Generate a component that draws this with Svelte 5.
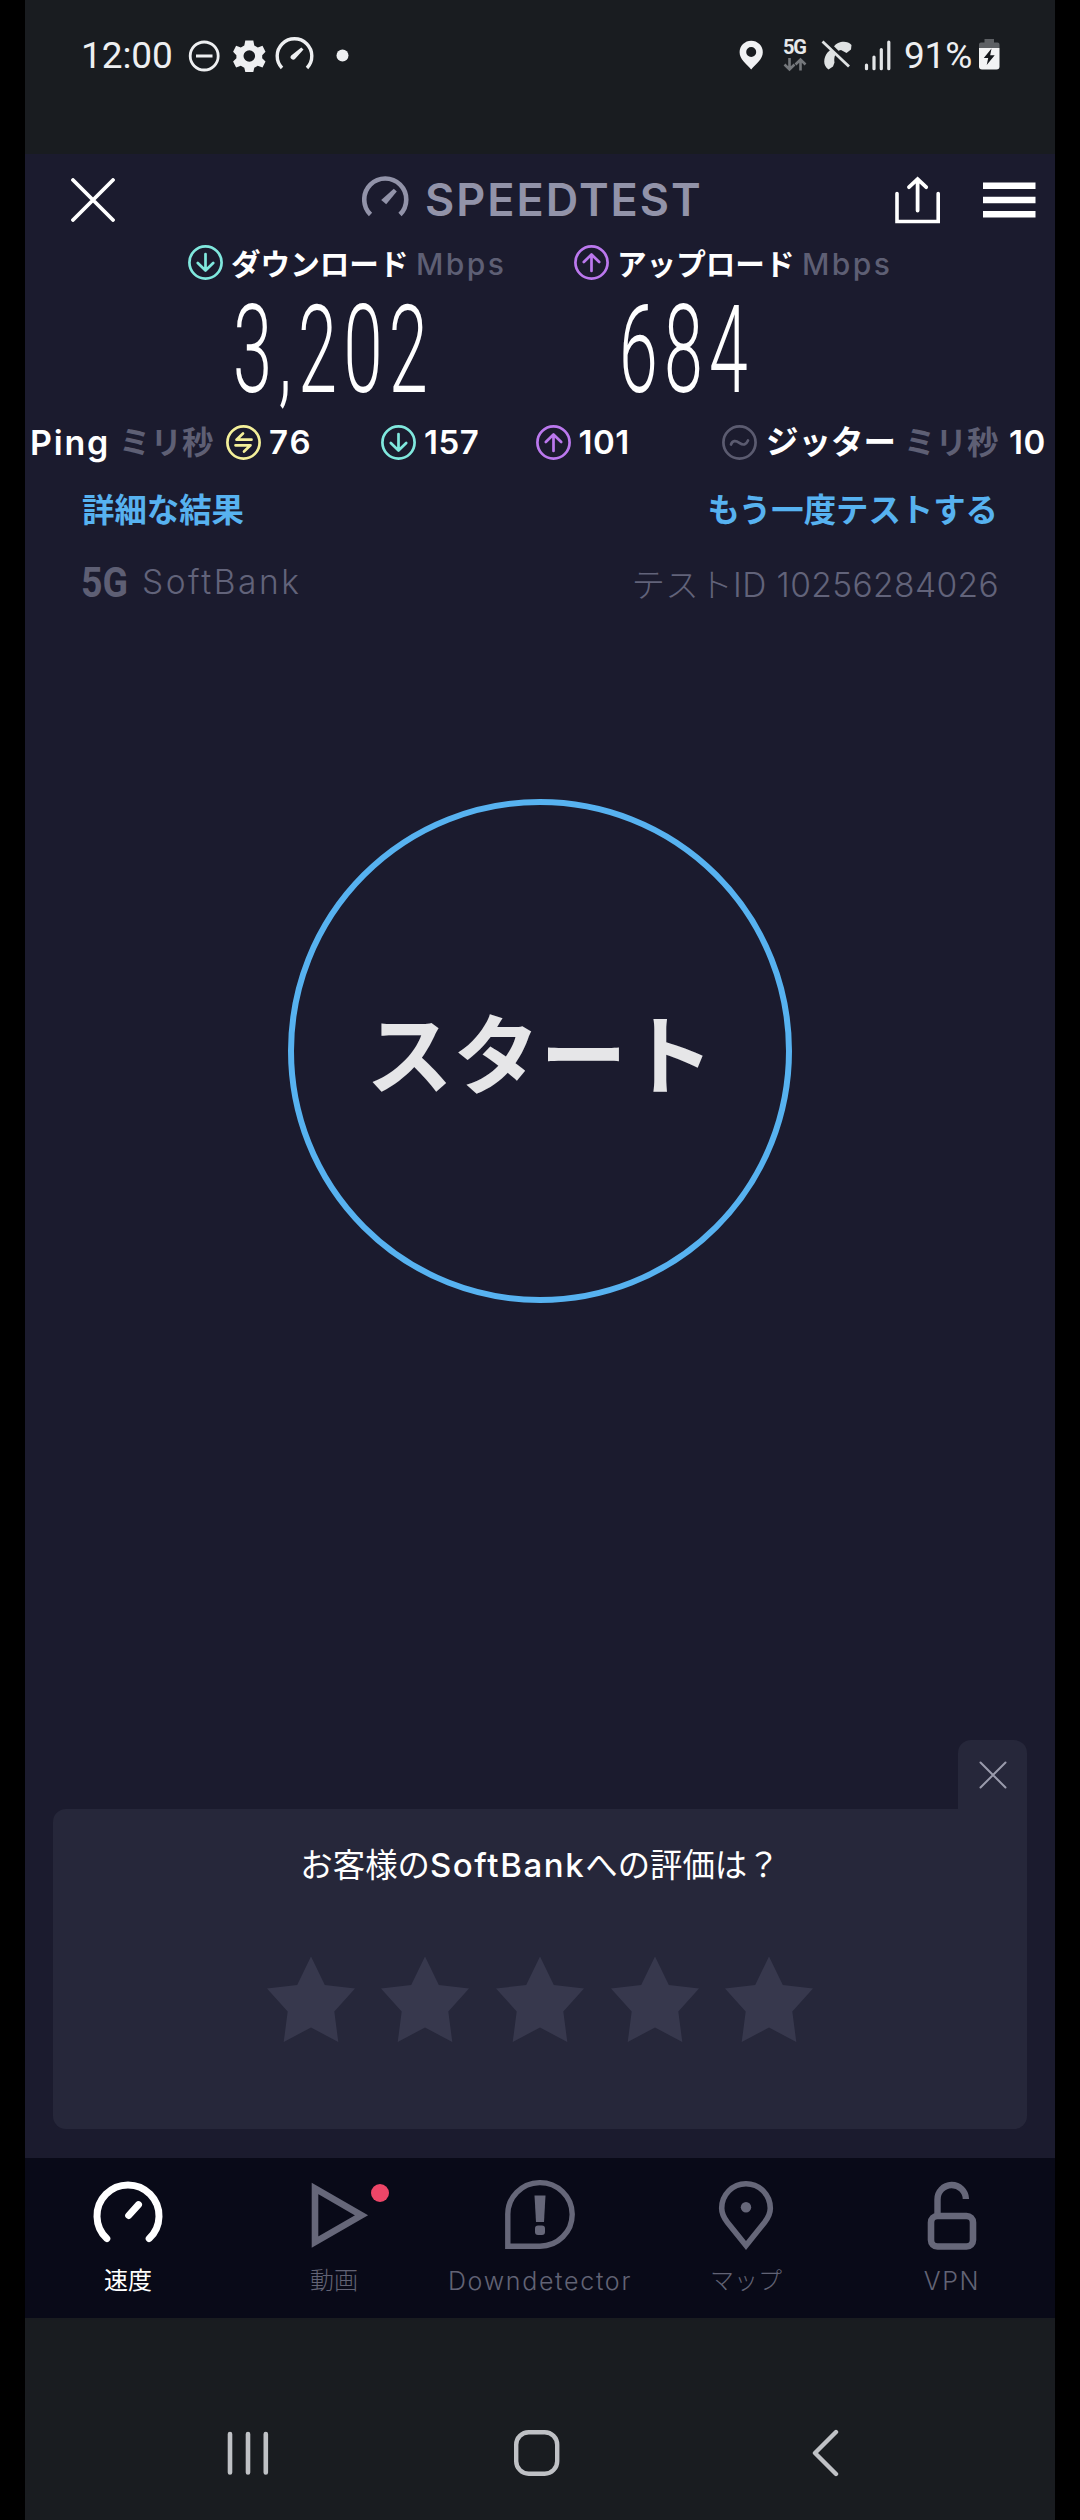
<script lang="ts">
    type Tab = {
        id: string;
        label: string;
        badge?: boolean;
    };

    const tabs: Tab[] = [
        { id: 'speed', label: '速度' },
        { id: 'video', label: '動画', badge: true },
        { id: 'detector', label: 'Downdetector' },
        { id: 'map', label: 'マップ' },
        { id: 'vpn', label: 'VPN' }
    ];

    let active = $state('speed');
    let rating = $state(0);
    let showRating = $state(true);
</script>

{#snippet ring(kind: string)}
    <svg class="ring {kind}" viewBox="0 0 35 35">
        <circle cx="17.5" cy="17.5" r="16.1" />
        {#if kind === 'download'}
            <path d="M17.5 9v16M9.8 18l7.7 7.5 7.7-7.5" />
        {:else if kind === 'upload'}
            <path d="M17.5 26V10M9.8 17l7.7-7.5 7.7 7.5" />
        {:else if kind === 'idle'}
            <path d="M25.5 14.7H10.5l6.5-6.2M9.5 20.3h15l-6.5 6.2" />
        {:else}
            <path d="M9 19.5c1.5-4 4.5-4.3 8.3-1.7 4.2 2.9 6.8 2 8.7-2.3" />
        {/if}
    </svg>
{/snippet}

{#snippet bigNumber(value: string, width: number)}
    <svg class="big" width={width + 8} height="122">
        <text x="0" y="112" textLength={width} lengthAdjust="spacingAndGlyphs">{value}</text>
    </svg>
{/snippet}

<div class="phone">
    <div class="status">
        <span class="clock">12:00</span>
        <svg width="170" height="40" viewBox="186 35 170 40">
            <circle cx="204.2" cy="56" r="14" fill="none" stroke="#eeeff1" stroke-width="2.8" />
            <path d="M196 56h16.5" stroke="#eeeff1" stroke-width="3" />
            <path
                fill="#eeeff1"
                fill-rule="evenodd"
                d="M245.300 40.500h8l1 5 3.500 2 4.700-1.700 3 6-3.300 3.400v3l3.300 3.300-3 6-4.700-1.700-3.500 2-1 4.200h-8l-1-4.200-3.500-2-4.700 1.700-3-6 3.300-3.300v-3l-3.300-3.400 3-6 4.700 1.700 3.500-2zM249.300 50.200a5.800 5.800 0 1 0 0 11.600a5.800 5.800 0 1 0 0-11.600z"
            />
            <path d="M282 68a17.300 17.300 0 1 1 25 0" fill="none" stroke="#eeeff1" stroke-width="3.4" />
            <path d="M301.300 47.500l2.200 2-8.300 9.200a2.300 2.300 0 0 1-4-3.300z" fill="#eeeff1" />
            <circle cx="342.500" cy="55.500" r="6" fill="#eeeff1" />
        </svg>
        <svg class="signals" width="160" height="40" viewBox="736 35 160 40">
            <path
                fill="#f0f1f3"
                fill-rule="evenodd"
                d="M751.200 40.700a11.600 11.600 0 0 1 11.600 11.600c0 7-6.500 11.500-11.600 17.200c-5.100-5.700-11.600-10.200-11.600-17.200a11.600 11.600 0 0 1 11.600-11.600zM751.200 47a5 5 0 1 0 0 10a5 5 0 1 0 0-10z"
            />
            <text x="783" y="53.800" textLength="24">5G</text>
            <path d="M789.500 58v11M784.500 64.500l5 5 5-5M800.500 70.500V60M795.500 64.500l5-5 5 5" fill="none" stroke="#74777b" stroke-width="2.600" />
            <path
                d="M834 46.500c3-5 13-7 17.500-1.500l-.5 4.500-4.500 3.500-5.500-3-2 .5c-5 4-5 8-4.500 12l-1.500 4-4.500 3c-6-4-5-12-1-17z"
                fill="#dfe2e3"
            />
            <path d="M824.500 40.500l26 25.500" stroke="#191c20" stroke-width="5" />
            <path d="M822.500 41.500l26.500 25" stroke="#dfe2e3" stroke-width="2.800" />
            <path d="M866.500 65v3.700M874 57v11.700M881.300 49.500v19.200M888.800 42v26.700" stroke="#e3e5e7" stroke-width="3.200" stroke-linecap="round" />
        </svg>
        <span class="percent">91%</span>
        <svg width="21" height="32" viewBox="0 0 21 32">
            <path d="M5.500 0h9.500v3.500h3.500a2 2 0 0 1 2 2V9H0V5.500a2 2 0 0 1 2-2h3.500z" fill="#5d6064" />
            <path d="M0 9h20.500v18.500a3 3 0 0 1-3 3H3a3 3 0 0 1-3-3z" fill="#f2f3f4" />
            <path d="M12.500 9.500L4.800 19h4.400l-1.500 7 8-9.700h-4.500z" fill="#15181c" />
        </svg>
    </div>

    <div class="screen">
        <header>
            <svg width="44" height="44" viewBox="0 0 44 44">
                <path d="M2 2l40 40M42 2L2 42" stroke="#fff" stroke-width="3.800" stroke-linecap="round" />
            </svg>
            <svg class="logo" width="47" height="42" viewBox="0 0 47 42">
                <path d="M8.500 38.500a21 21 0 1 1 29.500 0" fill="none" stroke="#9293a9" stroke-width="4.600" />
                <path d="M31.800 12.700l3 2.800L24.200 28.200l-5-4.300z" fill="#9293a9" />
            </svg>
            <h1>SPEEDTEST</h1>
            <svg class="share" width="46" height="48" viewBox="0 0 46 48">
                <path d="M2 17.500v28h41.200v-28" fill="none" stroke="#fff" stroke-width="3.600" stroke-linecap="round" />
                <path d="M22.600 34.500V3.500M14 11.200l8.600-8 8.600 8" fill="none" stroke="#fff" stroke-width="3.800" stroke-linecap="round" />
            </svg>
            <svg width="53" height="36" viewBox="0 0 53 36">
                <path d="M0 3.800h52.500M0 18h52.500M0 32.200h52.500" stroke="#fff" stroke-width="6.400" />
            </svg>
        </header>

        <div class="results">
            <div class="result first">
                <div class="caption">
                    {@render ring('download')}
                    <b>ダウンロード</b>
                    <span>Mbps</span>
                </div>
                {@render bigNumber('3,202', 201)}
            </div>
            <div class="result">
                <div class="caption">
                    {@render ring('upload')}
                    <b>アップロード</b>
                    <span>Mbps</span>
                </div>
                {@render bigNumber('684', 135)}
            </div>
        </div>

        <div class="latency">
            <div class="group ping">
                <span class="name">Ping</span>
                <span class="unit">ミリ秒</span>
                {@render ring('idle')}
                <span class="value">76</span>
            </div>
            <div class="group load">
                {@render ring('download')}
                <span class="value">157</span>
            </div>
            <div class="group load">
                {@render ring('upload')}
                <span class="value">101</span>
            </div>
            <div class="group jitter">
                {@render ring('jitter')}
                <span class="kana">ジッター</span>
                <span class="unit">ミリ秒</span>
                <span class="value">10</span>
            </div>
        </div>

        <div class="links">
            <span>詳細な結果</span>
            <span>もう一度テストする</span>
        </div>

        <div class="meta">
            <svg width="52" height="56">
                <text x="1" y="43" textLength="47" lengthAdjust="spacingAndGlyphs">5G</text>
            </svg>
            <span class="carrier">SoftBank</span>
            <span class="test-id">テストID 10256284026</span>
        </div>

        <button class="start">スタート</button>

        {#if showRating}
            <div class="rating">
                <button class="dismiss" aria-label="close" onclick={() => (showRating = false)}>
                    <svg width="28" height="28" viewBox="0 0 28 28">
                        <path d="M1.500 1.500l25 25M26.500 1.500l-25 25" stroke="#9a9bac" stroke-width="2" stroke-linecap="round" />
                    </svg>
                </button>
                <div class="card">
                    <p>お客様の<em>SoftBank</em>への評価は？</p>
                    <div class="stars">
                        {#each [1, 2, 3, 4, 5] as n}
                            <button class="star" class:on={n <= rating} aria-label="{n}" onclick={() => (rating = n)}>
                                <svg width="88" height="87" viewBox="0 0 88 86">
                                    <path d="M44 0l13.800 28.500 30.200 3.500-20.700 23 4 30.500L44 71 16.700 85.500l4-30.500L0 32l30.200-3.500z" />
                                </svg>
                            </button>
                        {/each}
                    </div>
                </div>
            </div>
        {/if}
    </div>

    <nav class="tabs">
        {#each tabs as tab}
            <button class="tab {tab.id}" class:active={active === tab.id} onclick={() => (active = tab.id)}>
                <svg class="tab-icon" width="110" height="72" viewBox="-55 0 110 72">
                    {#if tab.id === 'speed'}
                        <path d="M-21.200 59.500a31 31 0 1 1 42.400 0M.7 36.500L10.500 25.700" stroke-width="7" stroke-linecap="round" />
                    {:else if tab.id === 'video'}
                        <path d="M-19 9.500v53.500L27.500 36.300z" stroke-width="6.600" />
                    {:else if tab.id === 'detector'}
                        <path d="M-32.200 67.200V36.200A32.200 31.800 0 1 1 0 67.200z" stroke-width="5.400" />
                        <path class="solid" d="M-5.500 16.500H5.500L4 43h-8z" />
                        <rect class="solid" x="-5" y="46.500" width="10" height="9.500" rx="3" />
                    {:else if tab.id === 'map'}
                        <path d="M0 66.500L-18.500 43.500C-21.500 39.700-24.300 35-24.300 29.300a24.300 24.600 0 0 1 48.600 0C24.300 35 21.500 39.700 18.500 43.500z" stroke-width="5.600" />
                        <circle class="solid" cx="0" cy="28.200" r="5.200" />
                    {:else}
                        <path d="M-14.500 36V20.500a14.200 14.200 0 0 1 28.400-.5" stroke-width="6.400" />
                        <rect x="-21" y="37" width="42" height="30.500" rx="6.500" stroke-width="6.600" />
                    {/if}
                </svg>
                {#if tab.badge}
                    <i class="badge"></i>
                {/if}
                <span>{tab.label}</span>
            </button>
        {/each}
    </nav>

    <div class="system-nav">
        <svg width="42" height="46" viewBox="0 0 42 46">
            <path d="M3 4v38.500M21 4v38.500M38.800 4v38.500" stroke-width="4.600" />
        </svg>
        <svg class="home" width="46" height="46" viewBox="0 0 46 46">
            <rect x="2.200" y="2.200" width="41" height="41.500" rx="12.500" stroke-width="4.400" />
        </svg>
        <svg width="28" height="48" viewBox="0 0 28 48">
            <path d="M24 3L3 24l21 21" stroke-width="4.400" />
        </svg>
    </div>
</div>

<style>
    :global(body) {
        margin: 0;
        background: #000;
    }

    .phone {
        width: 1030px;
        height: 2520px;
        margin-left: 25px;
        display: flex;
        flex-direction: column;
        overflow: hidden;
        background: #191c20;
        color: #fff;
        font-family: Inter, "Noto Sans CJK JP", sans-serif;
    }

    svg {
        display: block;
        flex: none;
    }

    button {
        padding: 0;
        border: none;
        background: none;
        color: inherit;
        font: inherit;
    }

    .status {
        height: 154px;
        display: flex;
        align-items: flex-start;
        padding-top: 35px;
        padding-left: 56px;
        box-sizing: border-box;
        color: #eeeff1;
        font-family: Roboto, sans-serif;
        font-size: 37px;
        line-height: 42px;
    }

    .status svg:last-child {
        margin-top: 4px;
    }

    .clock {
        width: 105px;
        letter-spacing: -0.1px;
    }

    .signals {
        margin-left: 380px;
    }

    .signals text {
        font-size: 20px;
        font-weight: 700;
        fill: #e6e8ea;
    }

    .percent {
        width: 75px;
        margin-left: 8px;
        letter-spacing: -0.2px;
    }

    .screen {
        height: 2004px;
        display: flex;
        flex-direction: column;
        background: #1b1b2e;
    }

    header {
        height: 91px;
        display: flex;
        align-items: center;
        padding-left: 46px;
    }

    .logo {
        margin-left: 247px;
        margin-top: -5px;
    }

    h1 {
        width: 276px;
        margin: 0 0 0 16px;
        color: #9293a9;
        font-size: 45px;
        font-weight: 600;
        letter-spacing: 2px;
    }

    .share {
        margin-left: 193.5px;
        margin-right: 42.5px;
    }

    .results {
        height: 180px;
        display: flex;
    }

    .first {
        width: 386px;
        padding-left: 163px;
    }

    .caption {
        height: 35px;
        display: flex;
        align-items: center;
        color: #5e5f74;
        font-size: 30px;
        font-weight: 500;
        white-space: nowrap;
    }

    .caption b {
        width: 185px;
        margin-left: 8px;
        color: #fff;
        font-size: 29.6px;
        font-weight: 700;
    }

    .caption span {
        margin-top: 2px;
        letter-spacing: 2.4px;
    }

    .ring {
        width: 35px;
        height: 35px;
        fill: none;
        stroke: #5b5b70;
        stroke-width: 2.7;
        stroke-linecap: round;
        stroke-linejoin: round;
    }

    .download {
        stroke: #80e8de;
    }

    .upload {
        stroke: #bb78ee;
    }

    .idle {
        stroke: #f4f09a;
    }

    .big {
        margin-left: 45px;
        overflow: visible;
    }

    .big text {
        fill: #fff;
        font-family: Roboto, sans-serif;
        font-size: 122px;
        font-weight: 300;
        letter-spacing: 11px;
    }

    .latency {
        height: 35px;
        display: flex;
        align-items: center;
        font-size: 33px;
        font-weight: 600;
        line-height: 35px;
        white-space: nowrap;
    }

    .group {
        display: flex;
        flex: none;
        align-items: center;
    }

    .ping {
        width: 356px;
    }

    .name {
        width: 89px;
        margin-left: 5px;
        font-size: 34px;
        letter-spacing: 1.8px;
    }

    .unit {
        width: 107px;
        color: #5e5f74;
        font-size: 31.5px;
    }

    .value {
        margin-left: 8px;
        letter-spacing: 0.5px;
    }

    .ping .value {
        letter-spacing: 2px;
    }

    .load {
        width: 154.5px;
    }

    .jitter .ring {
        margin-left: 32px;
    }

    .kana {
        width: 138px;
        margin-left: 9px;
        font-size: 32.5px;
        font-weight: 700;
    }

    .jitter .unit {
        width: 97px;
    }

    .links {
        height: 50px;
        margin-top: 22px;
        padding: 0 57px 0 57px;
        display: flex;
        justify-content: space-between;
        align-items: center;
        color: #57b2f0;
        font-size: 32.4px;
        font-weight: 700;
    }

    .meta {
        height: 46px;
        margin-top: 27px;
        padding: 0 56px 0 55px;
        display: flex;
        align-items: center;
        color: #62637a;
        font-size: 33.5px;
        font-weight: 300;
    }

    .meta text {
        fill: #5e5f74;
        font-family: Roboto, sans-serif;
        font-size: 42px;
        font-weight: 700;
    }

    .carrier {
        margin-left: 10px;
        letter-spacing: 2.5px;
    }

    .test-id {
        margin-left: auto;
        letter-spacing: 0.4px;
    }

    .start {
        width: 504px;
        height: 504px;
        margin-top: 194px;
        padding-bottom: 3px;
        align-self: center;
        box-sizing: border-box;
        border: 6px solid #57b2f0;
        border-radius: 50%;
        color: #e6e6e8;
        font-size: 87px;
        font-weight: 700;
    }

    .rating {
        margin: auto 28px 29px;
        display: flex;
        flex-direction: column;
    }

    .dismiss {
        width: 69px;
        height: 69px;
        align-self: flex-end;
        display: flex;
        justify-content: center;
        align-items: center;
        box-sizing: border-box;
        border-radius: 13px 13px 0 0;
        background: #26273a;
    }

    .card {
        height: 320px;
        border-radius: 13px 0 13px 13px;
        background: #26273a;
    }

    p {
        margin: 0;
        padding-top: 32px;
        font-size: 32.4px;
        line-height: 48px;
        text-align: center;
    }

    em {
        font-size: 33px;
        font-style: normal;
        font-weight: 500;
        letter-spacing: 1.6px;
    }

    .stars {
        margin-top: 66px;
        display: flex;
        justify-content: center;
        gap: 26.7px;
    }

    .star {
        fill: #37384d;
    }

    .star.on {
        fill: #57b2f0;
    }

    .tabs {
        height: 160px;
        display: grid;
        grid-template-columns: repeat(5, 1fr);
        background: #090a18;
    }

    .tab {
        position: relative;
        display: flex;
        flex-direction: column;
        align-items: center;
        padding-top: 21px;
        color: #626375;
        font-size: 25px;
        font-weight: 300;
        line-height: 36px;
    }

    .tab span {
        margin-top: 12px;
        letter-spacing: 1.7px;
    }

    .speed span,
    .video span,
    .map span {
        font-size: 24px;
        letter-spacing: 0;
    }

    .tab-icon {
        fill: none;
        stroke: #666779;
    }

    .solid {
        fill: #666779;
        stroke: none;
    }

    .active {
        color: #fff;
        font-weight: 400;
    }

    .active .tab-icon {
        stroke: #fff;
    }

    .badge {
        position: absolute;
        top: 26px;
        left: 139.5px;
        width: 18px;
        height: 18px;
        border-radius: 50%;
        background: #ee4668;
    }

    .system-nav {
        height: 202px;
        display: flex;
        align-items: center;
        padding: 68px 0 0 202px;
        box-sizing: border-box;
        fill: none;
        stroke: #bfc1c5;
        stroke-linecap: round;
        stroke-linejoin: round;
    }

    .home {
        margin-left: 245px;
        margin-right: 252px;
    }
</style>
